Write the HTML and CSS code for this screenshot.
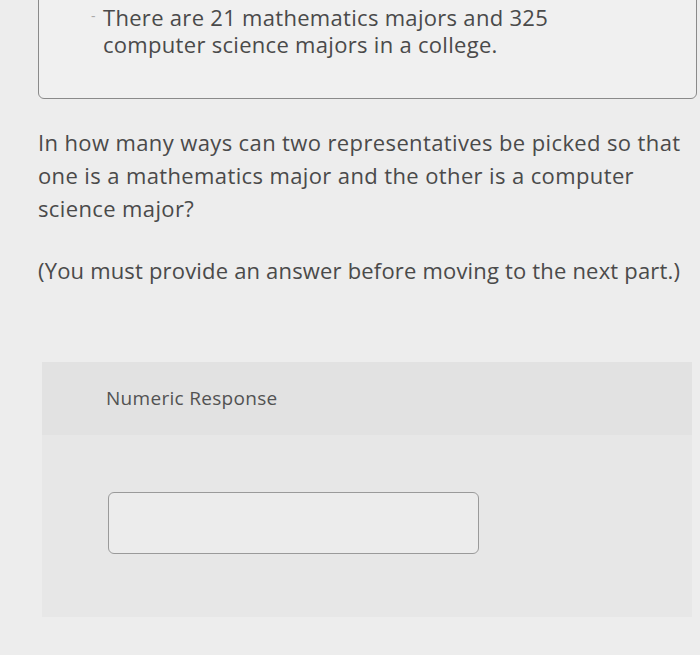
FILE: index.html
```html
<!DOCTYPE html>
<html>
<head>
<meta charset="utf-8">
<link rel="stylesheet" href="styles.css">
</head>
<body>
<div class="page">
  <div class="stem-box">
    <p class="stem"><span class="mark">-</span>There are 21 mathematics majors and 325<br>computer science majors in a college.</p>
  </div>
  <p class="question">In how many ways can two representatives be picked so that<br>one is a mathematics major and the other is a computer<br>science major?</p>
  <p class="note">(You must provide an answer before moving to the next part.)</p>
  <div class="panel">
    <div class="panel-head">Numeric Response</div>
    <div class="panel-body">
      <div class="answer"></div>
    </div>
  </div>
</div>
</body>
</html>
```
FILE: styles.css
```css
html, body {
  margin: 0;
  padding: 0;
  background: #ededed;
}
body {
  font-family: "Open Sans", "Liberation Sans", sans-serif;
  color: #4a4a4a;
  width: 700px;
  height: 655px;
  overflow: hidden;
}
.page {
  display: flex;
  flex-direction: column;
}
.stem-box {
  margin: -10px 3px 0 38px;
  height: 109px;
  border: 1.5px solid #8a8a8a;
  border-radius: 0 0 6px 6px;
  background: #f0f0f0;
  box-sizing: border-box;
  padding: 13px 0 0 64px;
}
.stem {
  margin: 0;
  font-size: 22px;
  line-height: 27px;
  letter-spacing: 0.3px;
  color: #4a4a4a;
  position: relative;
  white-space: nowrap;
}
.mark {
  position: absolute;
  left: -12px;
  top: -2px;
  color: #aaa;
  font-size: 14px;
}
.question {
  margin: 27px 0 0 38px;
  font-size: 22px;
  line-height: 33px;
  letter-spacing: 0.38px;
  color: #4a4a4a;
  white-space: nowrap;
}
.note {
  margin: 29px 0 0 38px;
  font-size: 22px;
  line-height: 33px;
  letter-spacing: 0.18px;
  color: #4a4a4a;
  white-space: nowrap;
}
.panel {
  margin: 75px 8px 0 42px;
  height: 255px;
  background: #e7e7e7;
  display: flex;
  flex-direction: column;
}
.panel-head {
  height: 73px;
  background: #e2e2e2;
  box-sizing: border-box;
  padding: 23px 0 0 64px;
  font-size: 19px;
  color: #525252;
  letter-spacing: 0.3px;
}
.panel-body {
  padding: 57px 0 0 66px;
}
.answer {
  width: 371px;
  height: 62px;
  box-sizing: border-box;
  border: 1.5px solid #9a9a9a;
  border-radius: 6px;
  background: #ececec;
}
```
